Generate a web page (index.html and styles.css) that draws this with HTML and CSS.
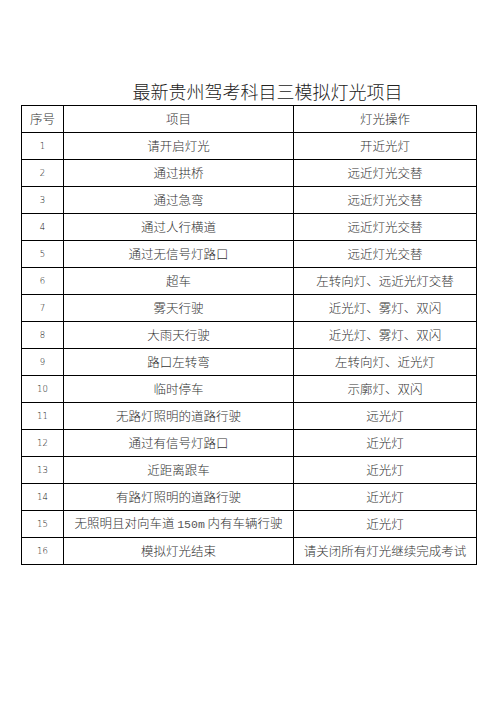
FILE: index.html
```html
<!DOCTYPE html>
<html lang="zh-CN">
<head>
<meta charset="utf-8">
<title>最新贵州驾考科目三模拟灯光项目</title>
<link rel="stylesheet" href="styles.css">
</head>
<body>
<div class="page">
  <h1 class="title">最新贵州驾考科目三模拟灯光项目</h1>
  <table class="lights">
    <colgroup>
      <col class="c-no">
      <col class="c-item">
      <col class="c-op">
    </colgroup>
    <thead>
      <tr><th class="hno">序号</th><th>项目</th><th>灯光操作</th></tr>
    </thead>
    <tbody>
      <tr><td class="no">1</td><td>请开启灯光</td><td>开近光灯</td></tr>
      <tr><td class="no">2</td><td>通过拱桥</td><td>远近灯光交替</td></tr>
      <tr><td class="no">3</td><td>通过急弯</td><td>远近灯光交替</td></tr>
      <tr><td class="no">4</td><td>通过人行横道</td><td>远近灯光交替</td></tr>
      <tr><td class="no">5</td><td>通过无信号灯路口</td><td>远近灯光交替</td></tr>
      <tr><td class="no">6</td><td>超车</td><td>左转向灯、远近光灯交替</td></tr>
      <tr><td class="no">7</td><td>雾天行驶</td><td>近光灯、雾灯、双闪</td></tr>
      <tr><td class="no">8</td><td>大雨天行驶</td><td>近光灯、雾灯、双闪</td></tr>
      <tr><td class="no">9</td><td>路口左转弯</td><td>左转向灯、近光灯</td></tr>
      <tr><td class="no">10</td><td>临时停车</td><td>示廓灯、双闪</td></tr>
      <tr><td class="no">11</td><td>无路灯照明的道路行驶</td><td>远光灯</td></tr>
      <tr><td class="no">12</td><td>通过有信号灯路口</td><td>近光灯</td></tr>
      <tr><td class="no">13</td><td>近距离跟车</td><td>近光灯</td></tr>
      <tr><td class="no">14</td><td>有路灯照明的道路行驶</td><td>近光灯</td></tr>
      <tr><td class="no">15</td><td>无照明且对向车道 <span class="latin">150m</span> 内有车辆行驶</td><td>近光灯</td></tr>
      <tr><td class="no">16</td><td>模拟灯光结束</td><td>请关闭所有灯光继续完成考试</td></tr>
    </tbody>
  </table>
</div>
</body>
</html>
```
FILE: styles.css
```css
html, body {
  margin: 0;
  padding: 0;
  background: #ffffff;
}

.page {
  padding: 79px 0 0 21px;
  font-family: "Noto Sans CJK SC", "Noto Sans CJK TC", sans-serif;
  color: #333333;
}

.title {
  width: 455px;
  margin: 0 0 2px 0;
  padding-left: 38px;
  box-sizing: border-box;
  text-align: center;
  font-size: 18px;
  line-height: 24px;
  font-weight: 300;
  color: #222222;
}

.lights {
  border-collapse: collapse;
  table-layout: fixed;
  width: 455px;
}

.c-no { width: 42px; }
.c-item { width: 230px; }
.c-op { width: 183px; }

.lights tr {
  height: 27px;
}

.lights th,
.lights td {
  border: 1px solid #000000;
  padding: 0;
  text-align: center;
  vertical-align: middle;
  font-size: 12.5px;
  line-height: 16px;
  font-weight: 300;
  white-space: nowrap;
  color: #333333;
}

.lights td.no {
  font-family: "DejaVu Sans", "Liberation Sans", sans-serif;
  font-size: 8.5px;
  color: #111111;
}

.latin {
  font-family: "Liberation Mono", monospace;
  font-size: 11.5px;
  color: #555555;
}
```
